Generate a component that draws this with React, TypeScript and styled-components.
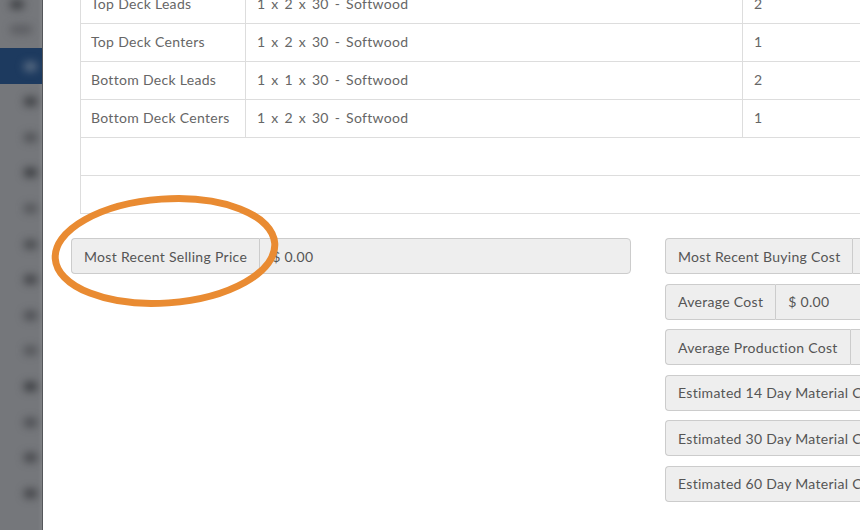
import * as React from "react";
import styled, { createGlobalStyle } from "styled-components";

const GlobalStyle = createGlobalStyle`
	html, body {
		margin: 0;
		padding: 0;
		background: #fff;
		overflow: hidden;
	}
	body {
		font-family: Lato, "Open Sans", Arial, sans-serif;
		font-size: 14px;
		letter-spacing: 0.3px;
		color: #555;
	}
`;

const Page = styled.div`
	position: relative;
	display: flex;
	width: 860px;
	height: 530px;
	overflow: hidden;
`;

const Sidebar = styled.div`
	flex: 0 0 42px;
	display: flex;
	flex-direction: column;
	background-color: #75777b;
	border-right: 1px solid #55575b;
	box-shadow: inset -5px 0 3px -3px rgba(255, 255, 255, 0.08);
	overflow: hidden;
`;

const SideHeader = styled.div`
	flex: 0 0 48px;
	box-sizing: border-box;
	display: flex;
	flex-direction: column;
	justify-content: space-between;
	padding: 0 0 14px 10px;
`;

const NavItem = styled.div<{ $active?: boolean }>`
	flex: 0 0 ${p => (p.$active ? "36px" : "35.6px")};
	display: flex;
	align-items: center;
	justify-content: flex-end;
	padding-right: 5px;
	background-color: ${p => (p.$active ? "#1d3a5f" : "transparent")};
`;

const Blob = styled.div<{ $tone: number; $w?: number }>`
	width: ${p => p.$w ?? 13}px;
	height: 9px;
	border-radius: 4px;
	background-color: ${p => `rgba(45, 47, 51, ${p.$tone})`};
	filter: blur(4px);
`;

const LightBlob = styled(Blob)`
	background-color: rgba(140, 150, 160, 0.6);
`;

const Main = styled.div`
	flex: 1;
	padding-left: 37px;
	overflow: hidden;
`;

const Table = styled.table`
	width: 820px;
	margin-top: -15px;
	border-collapse: collapse;
	border-left: 1px solid #ddd;
	table-layout: fixed;
`;

const Cell = styled.td<{ $spaced?: boolean }>`
	height: 20px;
	padding: 8px 11px 9px 11px;
	border-top: 1px solid #ddd;
	border-left: 1px solid #ddd;
	color: #666;
	line-height: 20px;
	white-space: nowrap;
	word-spacing: ${p => (p.$spaced ? "2px" : "0")};
	&:first-child {
		border-left: 0;
		padding-left: 10px;
	}
`;

const Bottom = styled.div`
	display: flex;
	gap: 34px;
	margin: 24px 0 0 -9px;
`;

const Column = styled.div`
	flex: 0 0 560px;
	display: flex;
	flex-direction: column;
	gap: 9.5px;
`;

const InputGroup = styled.div`
	display: flex;
	height: 36px;
	box-sizing: border-box;
`;

const Addon = styled.span`
	display: flex;
	align-items: center;
	padding: 0 12px;
	background-color: #eee;
	border: 1px solid #ccc;
	border-right: 0;
	border-radius: 4px 0 0 4px;
	color: #555;
	white-space: nowrap;
`;

const Field = styled.div`
	flex: 1;
	display: flex;
	align-items: center;
	padding: 0 12px;
	background-color: #eee;
	border: 1px solid #ccc;
	border-radius: 0 4px 4px 0;
	color: #555;
	white-space: nowrap;
`;

const Highlight = styled.svg`
	position: absolute;
	left: 46px;
	top: 190px;
	pointer-events: none;
`;

const rows = [
	["Top Deck Leads", "1 x 2 x 30 - Softwood", "2"],
	["Top Deck Centers", "1 x 2 x 30 - Softwood", "1"],
	["Bottom Deck Leads", "1 x 1 x 30 - Softwood", "2"],
	["Bottom Deck Centers", "1 x 2 x 30 - Softwood", "1"],
];

const costs = [
	{ label: "Most Recent Buying Cost", value: "$ 0.00" },
	{ label: "Average Cost", value: "$ 0.00" },
	{ label: "Average Production Cost", value: "$ 0.00" },
	{ label: "Estimated 14 Day Material Cost", value: "$ 0.00" },
	{ label: "Estimated 30 Day Material Cost", value: "$ 0.00" },
	{ label: "Estimated 60 Day Material Cost", value: "$ 0.00" },
];

const navTones = [0.8, 0.55, 0.85, 0.5, 0.65, 0.75, 0.6, 0.5, 0.85, 0.6, 0.7, 0.75];

export default function App() {
	return (
		<>
			<GlobalStyle />
			<Page>
				<Sidebar>
					<SideHeader>
						<Blob $tone={0.8} $w={14} />
						<Blob $tone={0.35} $w={22} />
					</SideHeader>
					<NavItem $active>
						<LightBlob $tone={1} />
					</NavItem>
					{navTones.map((t, i) => (
						<NavItem key={i}>
							<Blob $tone={t} />
						</NavItem>
					))}
				</Sidebar>
				<Main>
					<Table>
						<colgroup>
							<col style={{ width: 165 }} />
							<col style={{ width: 497 }} />
							<col />
						</colgroup>
						<tbody>
							{rows.map(r => (
								<tr key={r[0]}>
									<Cell>{r[0]}</Cell>
									<Cell $spaced>{r[1]}</Cell>
									<Cell>{r[2]}</Cell>
								</tr>
							))}
							<tr>
								<Cell colSpan={3}>&nbsp;</Cell>
							</tr>
							<tr>
								<Cell colSpan={3}>&nbsp;</Cell>
							</tr>
							<tr>
								<Cell colSpan={3} style={{ padding: 0, height: 0 }} />
							</tr>
						</tbody>
					</Table>
					<Bottom>
						<Column>
							<InputGroup>
								<Addon>Most Recent Selling Price</Addon>
								<Field>$ 0.00</Field>
							</InputGroup>
						</Column>
						<Column>
							{costs.map(c => (
								<InputGroup key={c.label}>
									<Addon>{c.label}</Addon>
									<Field>{c.value}</Field>
								</InputGroup>
							))}
						</Column>
					</Bottom>
				</Main>
				<Highlight width="244" height="126" viewBox="0 0 244 126">
					<ellipse
						cx="119"
						cy="61"
						rx="110"
						ry="52"
						fill="none"
						stroke="#e98b32"
						strokeWidth="7"
						transform="rotate(-4 119 61)"
					/>
				</Highlight>
			</Page>
		</>
	);
}
